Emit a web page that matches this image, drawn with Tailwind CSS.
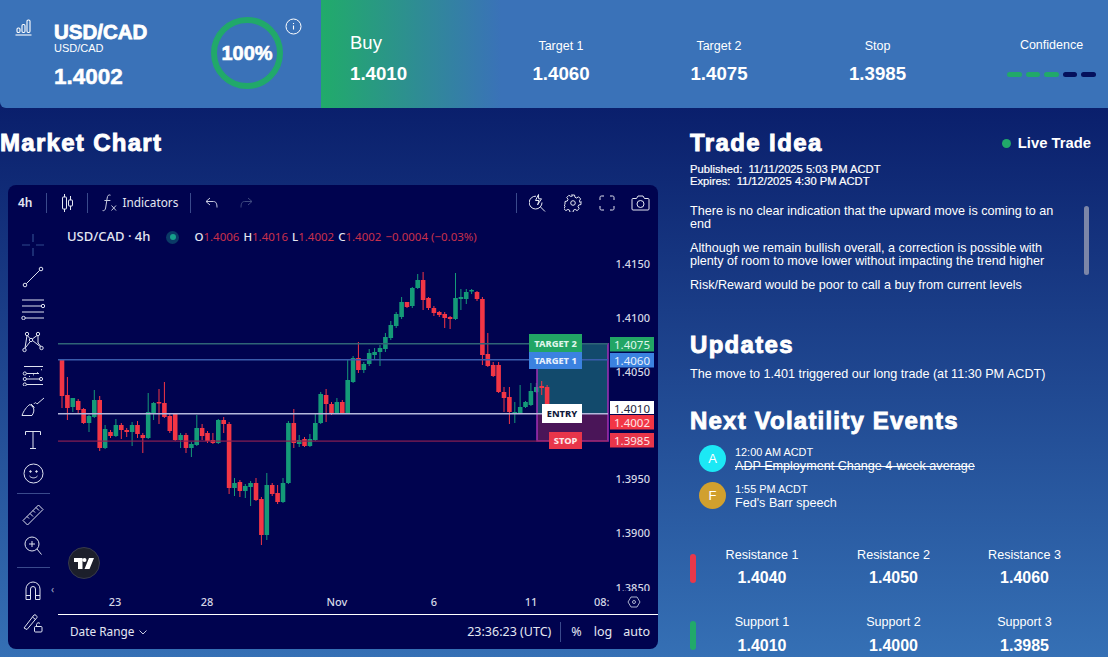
<!DOCTYPE html>
<html lang="en">
<head>
    <meta charset="UTF-8">
    <meta name="viewport" content="width=device-width, initial-scale=1.0">
    <title>USD/CAD Trade</title>
    <script src="https://cdn.jsdelivr.net/npm/@tailwindcss/browser@4"></script>
</head>
<body class="w-[1108px] h-[657px] overflow-hidden bg-[#0a1f6c] text-white font-['Liberation_Sans',Arial,sans-serif]">
    <!-- header -->
    <header class="flex h-[108px] bg-[#3a72b8] rounded-bl-md">
        <div class="relative w-[321px] shrink-0 flex">
            <svg class="ml-[15px] mt-[19px] w-[17px] h-[17px]" viewBox="0 0 17 17" fill="none" stroke="white" stroke-width="1.1">
                <rect x="2" y="9" width="3" height="4.5" rx="1.2"/><rect x="7" y="5.5" width="3" height="8" rx="1.2"/><rect x="12" y="1" width="3" height="12.5" rx="1.2"/><path d="M0.5 16h16"/>
            </svg>
            <div class="ml-[22px] pt-[22px]">
                <div class="text-[20.5px] leading-[20px] font-bold [-webkit-text-stroke:0.8px_white]">USD/CAD</div>
                <div class="text-[11px] leading-[12px] mt-[0px]">USD/CAD</div>
                <div class="text-[22.5px] leading-[24px] mt-[11px] font-bold [-webkit-text-stroke:0.5px_white]">1.4002</div>
            </div>
            <div class="absolute left-[211px] top-[17px] w-[72px] h-[72px] rounded-full border-[6px] border-[#21a96a] flex items-center justify-center">
                <span class="text-[20px] font-bold [-webkit-text-stroke:0.6px_white]">100%</span>
            </div>
            <svg class="absolute left-[285px] top-[18px] w-[17px] h-[17px]" viewBox="0 0 17 17" fill="none" stroke="white">
                <circle cx="8.5" cy="8.5" r="7.5"/><path d="M8.5 7.5v4M8.5 5v1" stroke-width="1.1"/>
            </svg>
        </div>
        <div class="flex-1 flex bg-[linear-gradient(90deg,#21ab6a_0px,#3a72b8_180px)]">
            <div class="w-[161px] pl-[29px] pt-[32px]">
                <div class="text-[18.5px] leading-[21px]">Buy</div>
                <div class="text-[18.7px] leading-[22px] mt-[10px] font-bold">1.4010</div>
            </div>
            <div class="w-[158px] text-center pt-[39px]">
                <div class="text-[12.5px] leading-[14px]">Target 1</div>
                <div class="text-[18.7px] leading-[22px] mt-[10px] font-bold">1.4060</div>
            </div>
            <div class="w-[158px] text-center pt-[39px]">
                <div class="text-[12.5px] leading-[14px]">Target 2</div>
                <div class="text-[18.7px] leading-[22px] mt-[10px] font-bold">1.4075</div>
            </div>
            <div class="w-[159px] text-center pt-[39px]">
                <div class="text-[12.5px] leading-[14px]">Stop</div>
                <div class="text-[18.7px] leading-[22px] mt-[10px] font-bold">1.3985</div>
            </div>
            <div class="w-[89px] ml-[50px] pt-[38px]">
                <div class="text-[12.5px] leading-[14px] text-center">Confidence</div>
                <div class="flex gap-[4px] mt-[20px]">
                    <span class="w-[15px] h-[5px] rounded-sm bg-[#21a96a]"></span>
                    <span class="w-[15px] h-[5px] rounded-sm bg-[#21a96a]"></span>
                    <span class="w-[15px] h-[5px] rounded-sm bg-[#21a96a]"></span>
                    <span class="w-[15px] h-[5px] rounded-sm bg-[#04105c]"></span>
                    <span class="w-[15px] h-[5px] rounded-sm bg-[#04105c]"></span>
                </div>
            </div>
        </div>
    </header>

    <main class="flex h-[549px] bg-[linear-gradient(180deg,#0a1f6c_0%,#3570b5_100%)]">
        <!-- chart column -->
        <section class="w-[690px] shrink-0">
            <h2 class="mt-[21px] h-[28px] text-[24px] leading-[28px] font-bold tracking-[1.3px] [-webkit-text-stroke:0.9px_white]">Market Chart</h2>
            <div class="relative ml-[8px] mt-[28px] w-[650px] h-[464px] rounded-lg bg-[#00034f] overflow-hidden flex flex-col font-['Noto_Sans',sans-serif]">
                <svg id="plot" class="absolute inset-0" width="650" height="464" viewBox="8 185 650 464"></svg>

                <!-- top toolbar -->
                <div class="relative shrink-0 flex items-center h-[35px] text-[11.8px] text-[#e4e7f2]">
                    <span class="ml-[10px] font-semibold text-[12px]">4h</span>
                    <span class="ml-[13px] w-px h-[20px] bg-[#3a4a8c]"></span>
                    <svg class="ml-[14px] w-[13px] h-[18px]" viewBox="0 0 13 18" fill="none" stroke="#e4e7f2"><path d="M3.5 0v3M3.5 15v3M9.5 2v4M9.5 12v4"/><rect x="1.5" y="3" width="4" height="12" rx="0.5"/><rect x="7.5" y="6" width="4" height="6" rx="0.5"/></svg>
                    <span class="ml-[13px] w-px h-[20px] bg-[#3a4a8c]"></span>
                    <svg class="ml-[14px] w-[15px] h-[18px]" viewBox="0 0 15 18" fill="none" stroke="#c8cce0"><path d="M8.5 1.2C6.5.4 5.6 1.5 5.2 4L3.6 14c-.3 2-1.4 3-3 2.6M2.4 6.5h6"/><path d="M9.5 11.5l4.5 5M14 11.5l-4.5 5"/></svg>
                    <span class="ml-[6px]">Indicators</span>
                    <span class="ml-[12px] w-px h-[20px] bg-[#3a4a8c]"></span>
                    <svg class="ml-[14px] w-[13px] h-[12px]" viewBox="0 0 13 12" fill="none" stroke="#c8cce0"><path d="M5 1L1 4.5 5 8M1 4.5h7.5c2.5 0 3.5 2 3.5 6"/></svg>
                    <svg class="ml-[22px] w-[13px] h-[12px]" viewBox="0 0 13 12" fill="none" stroke="#3f4a80"><path d="M8 1l4 3.5L8 8M12 4.5H4.5C2 4.5 1 6.5 1 10.5"/></svg>
                    <span class="ml-[263px] w-px h-[20px] bg-[#3a4a8c]"></span>
                    <svg class="ml-[12px] w-[17px] h-[18px]" viewBox="0 0 17 18" fill="none" stroke="#e4e7f2"><path d="M7 2.2A6.4 6.4 0 1 0 13 8.5M11.5 13l4.5 4.5"/><path d="M9.5.5L6.5 6.5h3.5L8.5 11 12.5 4.8H9.6z"/></svg>
                    <svg class="ml-[18px] w-[18px] h-[18px]" viewBox="0 0 18 18" fill="none" stroke="#e4e7f2"><circle cx="9" cy="9" r="2.3"/><path d="M7.5 1h3l.5 2.3 1.6.7 2-1.2 2 2.1-1.2 2 .7 1.6L17 7.500v3l-2.300.5-.7 1.600 1.200 2-2.100 2-2-1.200-1.600.7-.5 2.300h-3l-.5-2.300-1.600-.7-2 1.200-2.100-2 1.200-2-.7-1.600L1 10.500v-3l2.300-.5.7-1.600-1.200-2 2.100-2.100 2 1.200 1.600-.7z"/></svg>
                    <svg class="ml-[17px] w-[16px] h-[16px]" viewBox="0 0 16 16" fill="none" stroke="#e4e7f2"><path d="M1 5V2.500C1 1.500 1.500 1 2.500 1H5M11 1h2.500c1 0 1.500.5 1.500 1.500V5M15 11v2.500c0 1-.5 1.500-1.500 1.500H11M5 15H2.500C1.500 15 1 14.500 1 13.500V11"/></svg>
                    <svg class="ml-[16px] w-[19px] h-[16px]" viewBox="0 0 19 16" fill="none" stroke="#e4e7f2"><path d="M2 3.500h3.500L7 1h5l1.500 2.500H17c.6 0 1 .4 1 1V14c0 .6-.4 1-1 1H2c-.6 0-1-.4-1-1V4.500c0-.6.4-1 1-1z"/><circle cx="9.500" cy="9" r="3.500"/></svg>
                </div>

                <div class="relative flex-1 min-h-0 flex">
                    <!-- drawing tools -->
                    <div class="w-[50px] shrink-0 flex flex-col items-center pt-[9px]">
                        <div class="shrink-0 h-[32px] flex items-center"><svg class="w-[24px] h-[24px]" viewBox="0 0 24 24" stroke="#2e4a8e" stroke-width="1.200"><path d="M12 1v8M12 15v8M1 12h8M15 12h8"/></svg></div>
                        <div class="shrink-0 h-[32px] flex items-center"><svg class="w-[22px] h-[22px]" viewBox="0 0 22 22" fill="none" stroke="#dfe3f0"><circle cx="3" cy="19" r="1.800"/><circle cx="19" cy="3" r="1.800"/><path d="M4.300 17.700L17.700 4.300"/></svg></div>
                        <div class="shrink-0 h-[32px] flex items-center"><svg class="w-[24px] h-[22px]" viewBox="0 0 24 22" fill="none" stroke="#dfe3f0"><path d="M1 2h22M1 8h20M1 14h22M4 20h19"/><circle cx="22" cy="8" r="1.700"/><circle cx="2.500" cy="20" r="1.700"/></svg></div>
                        <div class="shrink-0 h-[33px] flex items-center"><svg class="w-[22px] h-[22px]" viewBox="0 0 22 22" fill="none" stroke="#dfe3f0"><circle cx="5" cy="3" r="1.700"/><circle cx="16" cy="3" r="1.700"/><circle cx="9" cy="9" r="1.700"/><circle cx="2.500" cy="19" r="1.700"/><circle cx="19.500" cy="17" r="1.700"/><path d="M5.500 4.600l2.500 3M15 4.500l-4.700 3.500M3 17.300L8.300 10.500M10.500 9.500l8 6.300M16 5v7l3 3.500M5 4.500L3 17"/></svg></div>
                        <div class="shrink-0 h-[33px] flex items-center"><svg class="w-[22px] h-[22px]" viewBox="0 0 22 22" fill="none" stroke="#dfe3f0"><path d="M2 2.500h19M4.500 9.500H17M4.500 15h14M4.500 20.500H21"/><circle cx="2.800" cy="9.500" r="1.600"/><circle cx="2.800" cy="15" r="1.600"/><circle cx="2.800" cy="20.500" r="1.600"/><circle cx="19" cy="15" r="1.600"/><path d="M7 12.500l1-.2M11 11l1-.3M15 9l1-.5M19 6l1-.5" /></svg></div>
                        <div class="shrink-0 h-[32px] flex items-center"><svg class="w-[24px] h-[20px]" viewBox="0 0 24 20" fill="none" stroke="#dfe3f0"><path d="M1 18.500h10c2-3 2.500-6 1-8.500L9 7.500C6 9 2.500 14 1 18.500z"/><path d="M10 7l3.500 3.500M13 7c1-2 2-1.500 3 0l7-6"/></svg></div>
                        <div class="shrink-0 h-[33px] flex items-center"><svg class="w-[18px] h-[20px]" viewBox="0 0 18 20" fill="none" stroke="#dfe3f0"><path d="M1.500 5V1.500h15V5M9 1.500v17M6 18.500h6"/></svg></div>
                        <div class="shrink-0 h-[34px] flex items-center"><svg class="w-[21px] h-[21px]" viewBox="0 0 21 21" fill="none" stroke="#dfe3f0"><circle cx="10.500" cy="10.500" r="9.500"/><circle cx="7.500" cy="8.500" r=".8" fill="#dfe3f0"/><circle cx="13.500" cy="8.500" r=".8" fill="#dfe3f0"/><path d="M6.500 13c2 2.500 6 2.500 8 0"/></svg></div>
                        <div class="shrink-0 mt-[3px] mb-[6px] w-[33px] h-px bg-[#3a4a8c]"></div>
                        <div class="shrink-0 h-[30px] flex items-center"><svg class="w-[22px] h-[22px]" viewBox="0 0 22 22" fill="none" stroke="#dfe3f0"><path d="M1 16.500L16.500 1 21 5.500 5.500 21zM5 12.500l2 2M8 9.500l3 3M11 6.500l2 2M14 3.500l3 3"/></svg></div>
                        <div class="shrink-0 h-[31px] flex items-center"><svg class="w-[18px] h-[20px]" viewBox="0 0 18 20" fill="none" stroke="#dfe3f0"><circle cx="8" cy="8" r="7"/><path d="M8 5v6M5 8h6M13 13l4.500 5.500"/></svg></div>
                        <div class="shrink-0 my-[6px] w-[33px] h-px bg-[#3a4a8c]"></div>
                        <div class="shrink-0 h-[32px] flex items-center"><svg class="w-[16px] h-[19px]" viewBox="0 0 16 19" fill="none" stroke="#dfe3f0"><path d="M1 18.500V8a7 7 0 0 1 14 0v10.500h-4.500V8a2.500 2.500 0 0 0-5 0v10.500zM1 14.500h4.500M10.500 14.500H15"/></svg></div>
                        <div class="shrink-0 h-[34px] flex items-center"><svg class="w-[20px] h-[20px]" viewBox="0 0 20 20" fill="none" stroke="#dfe3f0"><path d="M1 15L11 2c1-1 3.500 1 3 2.500L4 16.500 1 15zM9.500 4l3 2.500"/><rect x="11.500" y="13.500" width="7.500" height="5.500" rx="1"/><path d="M13.500 13.500V11.500a2 2 0 0 1 3.500-1"/></svg></div>
                    </div>

                    <!-- legend -->
                    <div class="flex items-center h-[34px] ml-[9px] whitespace-nowrap">
                        <span class="text-[13px] font-medium text-[#e4e7f2]">USD/CAD · 4h</span>
                        <span class="ml-[16px] w-[13px] h-[13px] rounded-full bg-[#0a3a66] flex items-center justify-center"><span class="w-[6px] h-[6px] rounded-full bg-[#16a08c]"></span></span>
                        <span class="ml-[15px] text-[11.5px] text-[#c9304c]"><b class="font-medium text-[#e4e7f2]">O</b>1.4006 <b class="ml-[1px] font-medium text-[#e4e7f2]">H</b>1.4016 <b class="ml-[1px] font-medium text-[#e4e7f2]">L</b>1.4002 <b class="ml-[1px] font-medium text-[#e4e7f2]">C</b>1.4002 <span class="ml-[1px]">−0.0004 (−0.03%)</span></span>
                    </div>

                    <!-- logo -->
                    <div class="absolute left-[60px] top-[327px] w-[32px] h-[32px] rounded-full bg-[#1c1f2b] border border-[#383b4c] flex items-center justify-center">
                        <svg class="w-[20px] h-[11px]" viewBox="0 0 20 11" fill="white"><path d="M0 0h8.500v11H4V4H0zM12.500 2a2 2 0 1 1-4 0 2 2 0 0 1 4 0zM15 0h5l-4.500 11h-5z"/></svg>
                    </div>
                    <span class="absolute left-[43px] top-[364px] text-[10px] leading-[10px] text-[#a9b0cc]">‹</span>
                </div>

                <!-- bottom bar -->
                <div class="relative shrink-0 ml-[50px] h-[35px] border-t-[1.500px] border-white flex items-center text-[12.500px] text-[#e4e7f2]">
                    <span class="ml-[12px] text-[11.800px]">Date Range</span>
                    <svg class="ml-[5px] w-[8px] h-[5px]" viewBox="0 0 8 5" fill="none" stroke="#c8cce0"><path d="M.5.5L4 4 7.500.5"/></svg>
                    <span class="ml-auto">23:36:23 (UTC)</span>
                    <span class="ml-[9px] w-px h-[20px] bg-[#3a4a8c]"></span>
                    <span class="ml-[10px]">%</span>
                    <span class="ml-[12px]">log</span>
                    <span class="ml-[11px] mr-[8px]">auto</span>
                </div>
            </div>
        </section>

        <!-- trade idea column -->
        <section class="flex-1 relative">
            <div class="flex justify-between items-center mt-[21px] h-[28px] pr-[17px]">
                <h2 class="text-[24px] leading-[28px] font-bold tracking-[1.400px] [-webkit-text-stroke:0.9px_white]">Trade Idea</h2>
                <div class="flex items-center">
                    <span class="w-[9px] h-[9px] rounded-full bg-[#21a96a]"></span>
                    <span class="ml-[7px] text-[14.800px] font-bold">Live Trade</span>
                </div>
            </div>
            <div class="mt-[6px] text-[11.200px] leading-[12px] font-medium [-webkit-text-stroke:0.2px_white]">
                <div>Published:&nbsp; 11/11/2025 5:03 PM ACDT</div>
                <div>Expires:&nbsp; 11/12/2025 4:30 PM ACDT</div>
            </div>
            <div class="mt-[18px] w-[372px] text-[12.600px] leading-[12.500px] space-y-[12px]">
                <p>There is no clear indication that the upward move is coming to an end</p>
                <p>Although we remain bullish overall, a correction is possible with plenty of room to move lower without impacting the trend higher</p>
                <p>Risk/Reward would be poor to call a buy from current levels</p>
            </div>
            <div class="absolute left-[394px] top-[98px] w-[5px] h-[69px] rounded-full bg-[#7c86a8]"></div>

            <h2 class="mt-[39px] text-[24px] leading-[28px] font-bold tracking-[1.300px] [-webkit-text-stroke:0.9px_white]">Updates</h2>
            <p class="mt-[8px] text-[12.600px] leading-[14px]">The move to 1.401 triggered our long trade (at 11:30 PM ACDT)</p>

            <h2 class="mt-[26px] text-[24px] leading-[28px] font-bold tracking-[1.200px] [-webkit-text-stroke:0.9px_white]">Next Volatility Events</h2>
            <div class="mt-[10px] ml-[9px] space-y-[9px]">
                <div class="flex items-center">
                    <span class="w-[27px] h-[27px] rounded-full bg-[#1ce8f5] flex items-center justify-center text-[13px] text-white">A</span>
                    <div class="ml-[9px]">
                        <div class="text-[10.900px] leading-[14px]">12:00 AM ACDT</div>
                        <div class="text-[12.600px] leading-[14px] line-through">ADP Employment Change 4-week average</div>
                    </div>
                </div>
                <div class="flex items-center">
                    <span class="w-[27px] h-[27px] rounded-full bg-[#d1a02e] flex items-center justify-center text-[13px] text-white">F</span>
                    <div class="ml-[9px]">
                        <div class="text-[10.900px] leading-[14px]">1:55 PM ACDT</div>
                        <div class="text-[12.600px] leading-[14px]">Fed's Barr speech</div>
                    </div>
                </div>
            </div>

            <div class="mt-[38px] flex items-start">
                <span class="mt-[6px] w-[6px] h-[29px] rounded-full bg-[#e8384a]"></span>
                <div class="grid grid-cols-[132px_131px_131px] text-center">
                    <div><div class="text-[12.600px] leading-[15px]">Resistance 1</div><div class="mt-[6px] text-[16px] leading-[18px] font-bold">1.4040</div></div>
                    <div><div class="text-[12.600px] leading-[15px]">Resistance 2</div><div class="mt-[6px] text-[16px] leading-[18px] font-bold">1.4050</div></div>
                    <div><div class="text-[12.600px] leading-[15px]">Resistance 3</div><div class="mt-[6px] text-[16px] leading-[18px] font-bold">1.4060</div></div>
                </div>
            </div>
            <div class="mt-[28px] flex items-start">
                <span class="mt-[6px] w-[6px] h-[29px] rounded-full bg-[#21a96a]"></span>
                <div class="grid grid-cols-[132px_131px_131px] text-center">
                    <div><div class="text-[12.600px] leading-[15px]">Support 1</div><div class="mt-[7px] text-[16px] leading-[18px] font-bold">1.4010</div></div>
                    <div><div class="text-[12.600px] leading-[15px]">Support 2</div><div class="mt-[7px] text-[16px] leading-[18px] font-bold">1.4000</div></div>
                    <div><div class="text-[12.600px] leading-[15px]">Support 3</div><div class="mt-[7px] text-[16px] leading-[18px] font-bold">1.3985</div></div>
                </div>
            </div>
        </section>
    </main>

    <script>
        // [colour, wick top, body top, body bottom, wick bottom], page pixel coords
        const candles = [
            ['r',359,359,396,408],['r',377,395,408,420],['g',398,398,407,412],['r',399,401,410,413],
            ['r',408,409,423,424],['g',415,416,423,432],['g',390,400,417,418],['r',396,400,448,451],
            ['g',425,429,448,449],['r',430,432,436,438],['g',419,425,436,437],['r',423,425,430,439],
            ['r',428,430,432,437],['g',422,425,432,446],['r',421,425,434,438],['r',433,435,438,453],
            ['g',393,412,438,439],['g',402,403,413,420],['r',389,402,403,424],['r',382,403,417,418],
            ['r',414,416,431,433],['r',413,414,440,441],['g',433,435,440,448],['r',433,435,448,453],
            ['g',442,444,448,457],['g',415,428,445,446],['r',424,428,436,440],['r',431,433,441,443],
            ['r',433,440,443,444],['g',419,420,443,444],['r',417,420,424,433],['r',422,424,488,494],
            ['g',478,483,488,496],['r',480,482,491,497],['g',484,486,491,498],['g',481,483,487,506],
            ['r',478,483,500,501],['r',497,499,535,545],['g',473,485,535,540],['r',483,485,494,496],
            ['r',485,493,502,504],['g',478,483,502,503],['g',421,423,483,484],['r',409,423,443,448],
            ['g',435,440,444,447],['r',437,439,446,447],['g',434,439,446,447],['g',413,423,440,441],
            ['g',392,394,423,424],['r',389,395,404,422],['r',402,404,413,415],['g',398,402,413,414],
            ['r',400,402,413,414],['g',360,380,413,414],['g',356,358,382,383],['r',342,358,370,373],
            ['g',362,364,370,373],['g',349,353,364,366],['g',348,352,355,360],['g',345,348,352,366],
            ['g',333,337,349,352],['g',321,325,338,340],['g',312,314,326,328],['g',297,302,317,319],
            ['r',302,302,307,308],['g',287,288,306,308],['g',274,280,288,289],['r',272,280,300,310],
            ['r',297,298,308,310],['r',306,308,313,316],['r',311,312,315,317],['r',312,314,318,328],
            ['r',316,317,319,329],['g',273,298,319,320],['g',289,297,299,310],['g',289,292,299,304],
            ['g',289,290,291,294],['r',291,292,299,301],['r',297,299,355,365],['r',333,354,366,367],
            ['r',362,365,376,377],['r',362,365,392,393],['r',387,392,398,412],['r',387,397,412,424],
            ['g',402,412,414,423],['g',385,407,413,414],['g',401,402,407,408],['g',383,391,405,406],
            ['g',383,387,392,393],['r',381,386,388,395],['r',385,387,413,414]
        ];
        const colors = { r: '#f23645', g: '#149a78' };
        let svg = '';
        const rect = (x, y, w, h, fill, extra = '') => `<rect x="${x}" y="${y}" width="${w}" height="${h}" fill="${fill}" ${extra}/>`;
        const text = (x, y, t, fill, anchor = 'start', size = 11, weight = 500) =>
            `<text x="${x}" y="${y}" fill="${fill}" font-size="${size}" font-weight="${weight}" text-anchor="${anchor}" dominant-baseline="central">${t}</text>`;

        // position box
        svg += rect(537, 343, 71, 70, '#124a6c');
        svg += rect(537, 413, 71, 28, '#4a1558');

        candles.forEach((c, i) => {
            const x = 62 + i * 5.39, f = colors[c[0]];
            svg += rect((x - 0.5).toFixed(1), c[1], 1, c[4] - c[1], f);
            svg += rect((x - 2.3).toFixed(1), c[2], 4.6, Math.max(c[3] - c[2], 1.5), f);
        });

        svg += '<path d="M537 343v98h71v-98" fill="none" stroke="#a12fb4" stroke-width="1.500"/>';
        svg += rect(58, 343, 550, 1.500, '#2f6476') + rect(58, 359, 550, 1.500, '#3a5cac');
        svg += rect(58, 413, 550, 1.500, '#b4b8dc') + rect(58, 440.500, 550, 1.200, '#8a2052');

        // price scale
        [[263,'1.4150'],[317,'1.4100'],[371,'1.4050'],[478,'1.3950'],[532,'1.3900'],[587,'1.3850']].forEach(p => {
            svg += text(650, p[0], p[1], '#d5d8e6', 'end');
        });
        svg += rect(58, 591, 600, 24, '#00034f');

        // level labels
        [[337,'1.4075','#22a565','#dff5ea'],[353,'1.4060','#3b82e0','#e6effc'],[401,'1.4010','#ffffff','#1c2540'],[415,'1.4002','#f23645','#fde4e6'],[433,'1.3985','#e8354a','#fde4e6']].forEach(l => {
            svg += rect(610, l[0], 44, l[0] === 401 ? 13 : 14.500, l[2]);
            svg += text(650, l[0] + 7, l[1], l[3], 'end', 11.500, 400);
        });
        [[529,334,53,18,'TARGET 2','#22a565','#dff5ea'],[529,352,53,17,'TARGET 1','#3b82e0','#e6effc'],[542,404,40,19,'ENTRY','#ffffff','#101a3c'],[549,432,33,17,'STOP','#e8354a','#fde4e6']].forEach(l => {
            svg += rect(l[0], l[1], l[2], l[3], l[5]);
            svg += text(l[0] + l[2] / 2, l[1] + l[3] / 2, l[4], l[6], 'middle', 9.300, 800);
        });

        // time scale
        [[115,'23'],[207,'28'],[337,'Nov'],[434,'6'],[531,'11']].forEach(t => {
            svg += text(t[0], 601, t[1], '#d5d8e6', 'middle');
        });
        svg += text(594, 601, '08:', '#d5d8e6');
        svg += '<path d="M628 602l3-5h6l3 5-3 5h-6z" fill="none" stroke="#a9b0cc"/><circle cx="634" cy="602" r="1.500" fill="none" stroke="#a9b0cc"/>';

        document.getElementById('plot').innerHTML = svg;
    </script>
</body>
</html>
